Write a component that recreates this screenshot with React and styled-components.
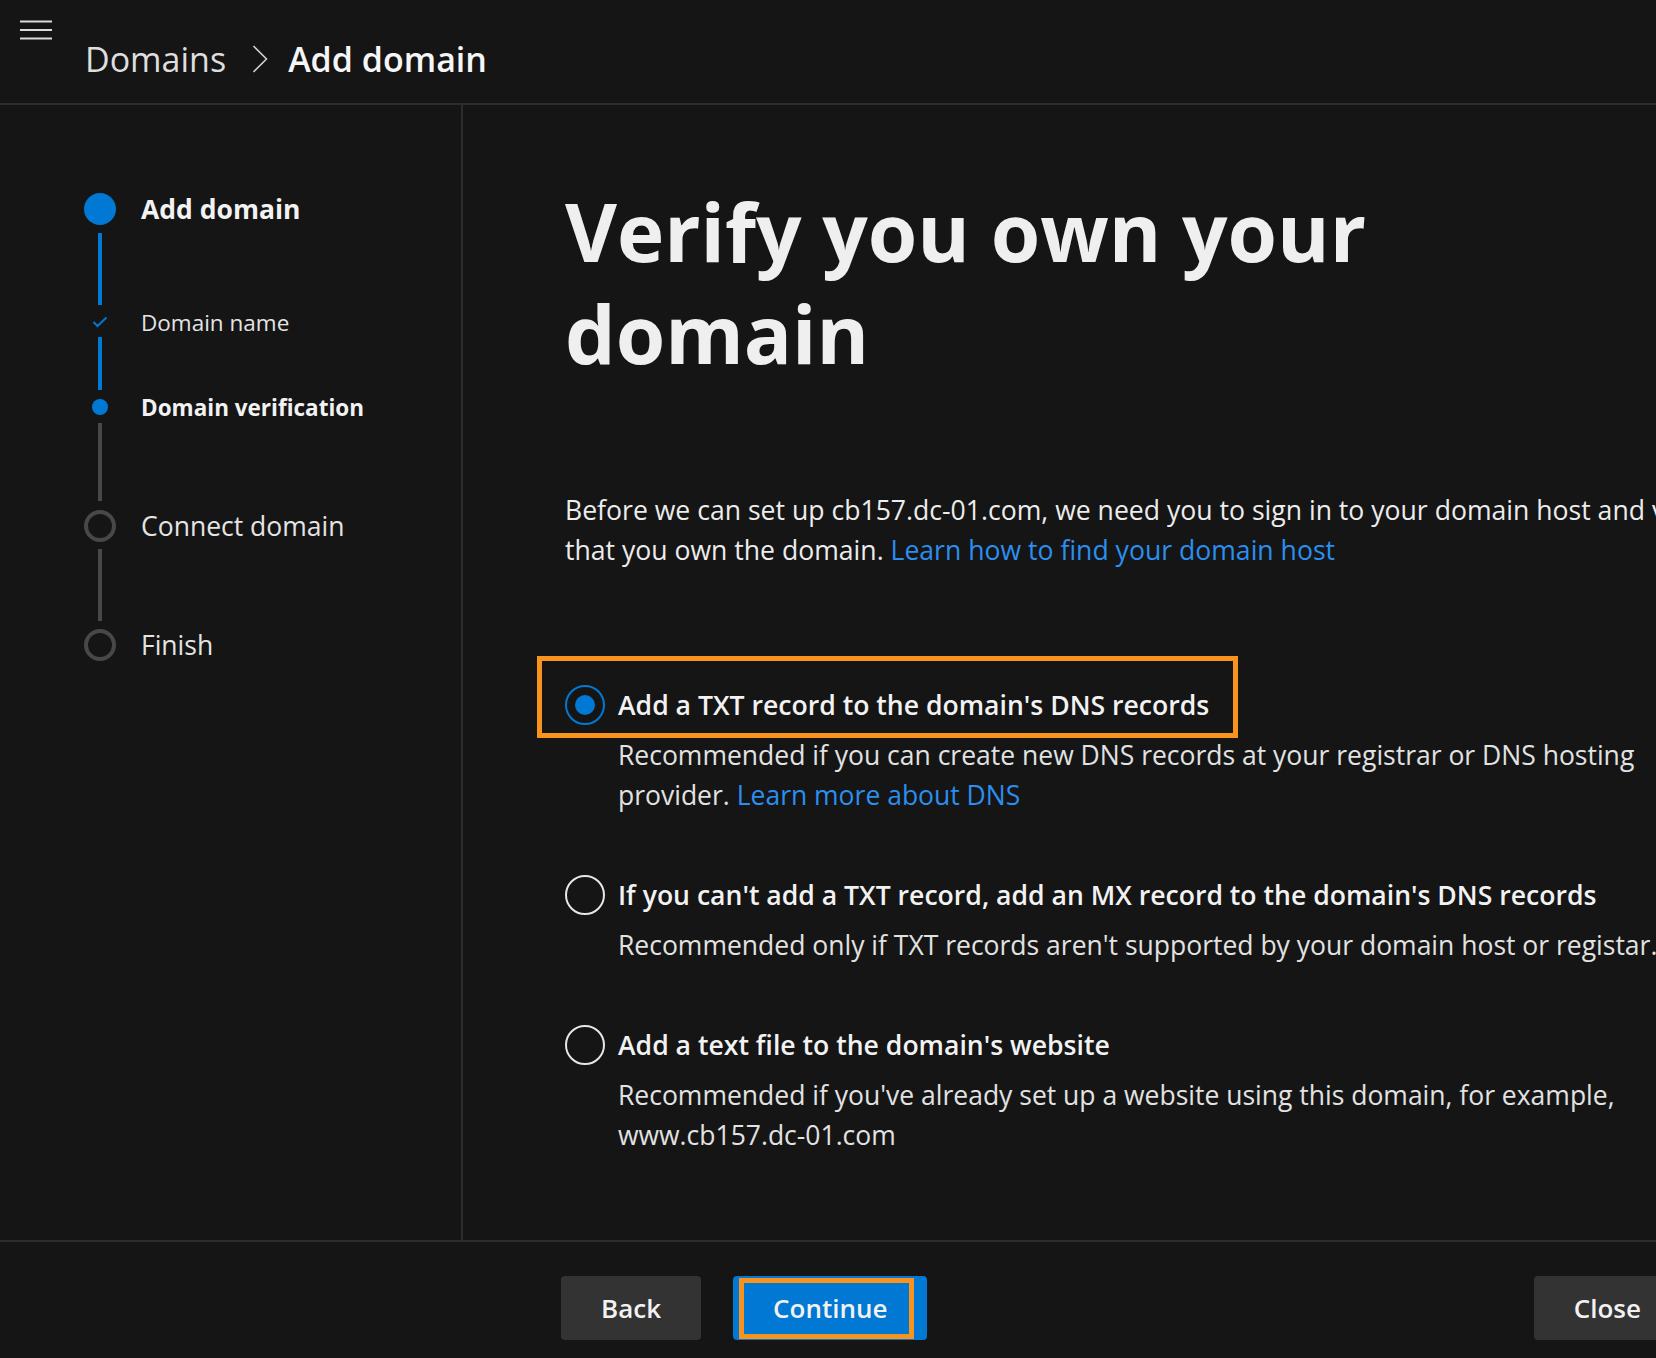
import React from "react";
import styled, { createGlobalStyle } from "styled-components";

const BLUE = "#0078d4";
const GRAY = "#484848";
const LINE = "#2d2d2d";

const GlobalStyle = createGlobalStyle`
  html, body {
    margin: 0;
    padding: 0;
    background: #151515;
    overflow: hidden;
  }
  body {
    font-family: "Open Sans", "Noto Sans", sans-serif;
    color: #f0f0f0;
  }
  * {
    box-sizing: border-box;
  }
`;

const steps = [
  { label: "Add domain", kind: "active", size: 32, bold: true, fs: 26.5, line: { top: 8, h: 72, bottom: 8, color: BLUE } },
  { label: "Domain name", kind: "done", size: 18, fs: 22.5, line: { top: 6, h: 53, bottom: 9, color: BLUE } },
  { label: "Domain verification", kind: "current", size: 16, bold: true, fs: 22.5, line: { top: 8, h: 78, bottom: 9, color: GRAY } },
  { label: "Connect domain", kind: "todo", size: 32, fs: 26.5, line: { top: 7, h: 72, bottom: 8, color: GRAY } },
  { label: "Finish", kind: "todo", size: 32, fs: 26.5 },
];

const options = [
  {
    id: "txt",
    title: "Add a TXT record to the domain's DNS records",
    checked: true,
    lines: [
      ["Recommended if you can create new DNS records at your registrar or DNS hosting"],
      ["provider. ", { link: "Learn more about DNS" }],
    ],
  },
  {
    id: "mx",
    title: "If you can't add a TXT record, add an MX record to the domain's DNS records",
    lines: [["Recommended only if TXT records aren't supported by your domain host or registar."]],
  },
  {
    id: "file",
    title: "Add a text file to the domain's website",
    lines: [
      ["Recommended if you've already set up a website using this domain, for example,"],
      ["www.cb157.dc-01.com"],
    ],
  },
];

const App = () => {
  return (
    <Page>
      <GlobalStyle />
      <Header>
        <MenuButton aria-label="Menu">
          <svg width="32" height="20" viewBox="0 0 32 20">
            <path d="M0 1.5H32M0 10H32M0 18.5H32" stroke="#dcdcdc" strokeWidth="1.8" />
          </svg>
        </MenuButton>
        <Crumbs>
          <Crumb>Domains</Crumb>
          <CrumbSep>
            <svg width="16" height="28" viewBox="0 0 16 28">
              <polyline points="1.5,1 14.5,14 1.5,27" fill="none" stroke="#cfcfcf" strokeWidth="1.6" />
            </svg>
          </CrumbSep>
          <Crumb $current>Add domain</Crumb>
        </Crumbs>
      </Header>

      <Body>
        <Sidebar>
          {steps.map((s) => (
            <StepRow key={s.label}>
              <Indicator>
                <Marker $kind={s.kind} $size={s.size}>
                  {s.kind === "done" && (
                    <svg width="16" height="12" viewBox="0 0 16 12">
                      <polyline points="1.5,6 5.5,10 14.5,1.5" fill="none" stroke={BLUE} strokeWidth="2" />
                    </svg>
                  )}
                </Marker>
                {s.line && (
                  <Connector $top={s.line.top} $h={s.line.h} $bottom={s.line.bottom} $color={s.line.color} />
                )}
              </Indicator>
              <StepLabel $h={s.size} $bold={s.bold} $fs={s.fs}>
                {s.label}
              </StepLabel>
            </StepRow>
          ))}
        </Sidebar>

        <Main>
          <Title>
            Verify you own your
            <br />
            domain
          </Title>
          <Intro>
            Before we can set up cb157.dc-01.com, we need you to sign in to your domain host and verify
            <br />
            that you own the domain. <Link href="#">Learn how to find your domain host</Link>
          </Intro>

          <Options>
            {options.map((o) => (
              <Option key={o.id}>
                <OptionRow>
                  <Radio $checked={o.checked} />
                  <span>{o.title}</span>
                  {o.checked && <Highlight />}
                </OptionRow>
                <Desc>
                  {o.lines.map((line, i) => (
                    <React.Fragment key={i}>
                      {i > 0 && <br />}
                      {line.map((part, j) =>
                        typeof part === "string" ? (
                          <React.Fragment key={j}>{part}</React.Fragment>
                        ) : (
                          <Link key={j} href="#">
                            {part.link}
                          </Link>
                        )
                      )}
                    </React.Fragment>
                  ))}
                </Desc>
              </Option>
            ))}
          </Options>
        </Main>
      </Body>

      <Footer>
        <Button>Back</Button>
        <Button $primary>
          Continue
          <ButtonHighlight />
        </Button>
        <Button $push>Close</Button>
      </Footer>
    </Page>
  );
};

const Page = styled.div`
  width: 1720px;
  height: 1358px;
  display: flex;
  flex-direction: column;
`;

const Header = styled.header`
  height: 105px;
  flex-shrink: 0;
  display: flex;
  align-items: flex-start;
  border-bottom: 2px solid ${LINE};
`;

const MenuButton = styled.button`
  margin: 20px 0 0 20px;
  padding: 0;
  width: 32px;
  height: 20px;
  border: 0;
  background: none;
  display: flex;
`;

const Crumbs = styled.nav`
  display: flex;
  align-items: center;
  margin: 39px 0 0 33px;
  font-size: 34px;
  line-height: 40px;
`;

const Crumb = styled.span`
  color: ${(p) => (p.$current ? "#f6f6f6" : "#dedede")};
  font-weight: ${(p) => (p.$current ? 600 : 400)};
`;

const CrumbSep = styled.span`
  display: flex;
  margin: 0 20px 0 26px;
`;

const Body = styled.div`
  display: flex;
  height: 1135px;
  flex-shrink: 0;
`;

const Sidebar = styled.aside`
  width: 463px;
  flex-shrink: 0;
  border-right: 2px solid ${LINE};
  padding: 88px 0 0 84px;
`;

const StepRow = styled.div`
  display: grid;
  grid-template-columns: 32px auto;
  column-gap: 25px;
  align-items: start;
`;

const Indicator = styled.div`
  display: flex;
  flex-direction: column;
  align-items: center;
`;

const Marker = styled.div`
  width: ${(p) => (p.$kind === "done" ? 24 : p.$size)}px;
  height: ${(p) => p.$size}px;
  border-radius: ${(p) => (p.$kind === "done" ? "0" : "50%")};
  display: flex;
  align-items: center;
  justify-content: center;
  background: ${(p) => (p.$kind === "active" || p.$kind === "current" ? BLUE : "transparent")};
  border: ${(p) => (p.$kind === "todo" ? `4px solid ${GRAY}` : "none")};
`;

const Connector = styled.span`
  display: block;
  width: 4px;
  height: ${(p) => p.$h}px;
  margin: ${(p) => p.$top}px 0 ${(p) => p.$bottom}px;
  background: ${(p) => p.$color};
`;

const StepLabel = styled.div`
  height: ${(p) => p.$h}px;
  display: flex;
  align-items: center;
  white-space: nowrap;
  font-size: ${(p) => p.$fs}px;
  font-weight: ${(p) => (p.$bold ? 700 : 400)};
  color: ${(p) => (p.$bold ? "#f2f2f2" : "#e4e4e4")};
`;

const Main = styled.main`
  flex: 1;
  min-width: 0;
  padding: 75px 0 0 102px;
`;

const Title = styled.h1`
  margin: 0;
  font-size: 80px;
  font-weight: 700;
  line-height: 102px;
  color: #efefef;
`;

const Intro = styled.p`
  margin: 106px 0 0;
  font-size: 26.6px;
  line-height: 40px;
  white-space: nowrap;
  color: #ececec;
`;

const Link = styled.a`
  color: #2b8ff0;
  text-decoration: none;
`;

const Options = styled.div`
  margin-top: 105px;
  display: flex;
  flex-direction: column;
  gap: 50px;
`;

const Option = styled.div`
  display: flex;
  flex-direction: column;
  align-items: flex-start;
`;

const OptionRow = styled.div`
  position: relative;
  display: inline-flex;
  align-items: center;
  gap: 13px;
  height: 60px;
  font-size: 26.6px;
  font-weight: 600;
  color: #f2f2f2;
  white-space: nowrap;
`;

const Radio = styled.span`
  width: 40px;
  height: 40px;
  flex-shrink: 0;
  border-radius: 50%;
  border: 2px solid ${(p) => (p.$checked ? BLUE : "#e6e6e6")};
  display: flex;
  align-items: center;
  justify-content: center;

  &::after {
    content: "";
    display: ${(p) => (p.$checked ? "block" : "none")};
    width: 20px;
    height: 20px;
    border-radius: 50%;
    background: ${BLUE};
  }
`;

const Highlight = styled.span`
  position: absolute;
  inset: -19px -29px -3px -28px;
  border: 5px solid #f8941d;
  pointer-events: none;
`;

const Desc = styled.div`
  padding-left: 53px;
  font-size: 26.5px;
  line-height: 40px;
  color: #e2e2e2;
  white-space: nowrap;
`;

const Footer = styled.footer`
  flex: 1;
  border-top: 2px solid ${LINE};
  display: flex;
  align-items: flex-start;
  gap: 32px;
  padding: 34px 39px 0 561px;
`;

const Button = styled.button`
  position: relative;
  height: 64px;
  min-width: 140px;
  padding: 0 40px;
  margin-left: ${(p) => (p.$push ? "auto" : "0")};
  border: 0;
  border-radius: 4px;
  font-family: "Open Sans", "Noto Sans", sans-serif;
  font-size: 26px;
  font-weight: 600;
  color: #f2f2f2;
  background: ${(p) => (p.$primary ? BLUE : "#333333")};
`;

const ButtonHighlight = styled.span`
  position: absolute;
  inset: 2px 13px 1px 6px;
  border: 5px solid #f8941d;
  pointer-events: none;
`;

export default App;
